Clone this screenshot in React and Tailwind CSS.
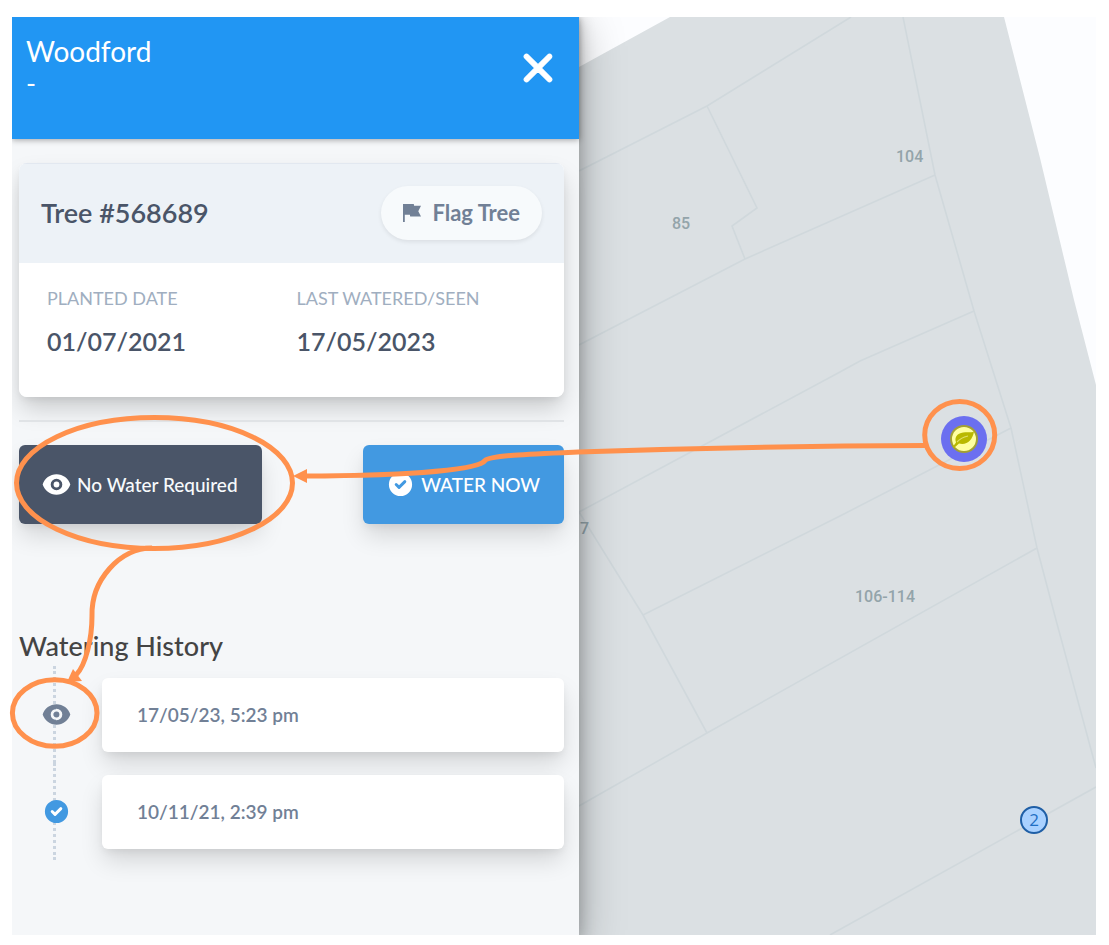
import React from "react";
import { HiCheckCircle, HiEye, HiX } from "react-icons/hi";

const history = [
  { id: 1, type: "seen", date: "17/05/23, 5:23 pm" },
  { id: 2, type: "watered", date: "10/11/21, 2:39 pm" },
];

const parcels = [
  "M579 171 L707 106 L851 17",
  "M707 106 L757 208 L732 226 L745 259",
  "M579 345 L745 259 L935 175",
  "M903 17 L935 175 L974 311 L1011 428 L1037 548 L1056 620 L1096 768",
  "M579 512 L840 372 L860 361 L974 311",
  "M579 512 L643 615 L707 733",
  "M643 615 L840 516 L1011 428",
  "M1037 548 L707 733 L579 806",
  "M1096 787 L830 935",
];

const houses = [
  { label: "104", x: 896, y: 162 },
  { label: "85", x: 672, y: 229 },
  { label: "7", x: 580, y: 534 },
  { label: "106-114", x: 855, y: 602 },
];

function FlagIcon() {
  return (
    <svg viewBox="0 0 20 20" className="h-[18px] w-[18px] fill-current" aria-hidden="true">
      <path d="M7.667 12H2v8H0V0h12l.333 2H20l-3 6 3 6H8l-.333-2z" />
    </svg>
  );
}

function Header() {
  return (
    <header className="relative z-10 flex items-start justify-between bg-[#2196f3] pt-4 pr-[18px] pb-[42px] pl-[14px] text-white shadow-[0_1px_6px_rgba(0,0,0,0.35)]">
      <div>
        <h1 className="text-[28px] leading-9">Woodford</h1>
        <p className="text-[27px] leading-7">-</p>
      </div>
      <button type="button" aria-label="Close" className="mt-3">
        <HiX className="h-[46px] w-[46px] stroke-white stroke-[0.5]" />
      </button>
    </header>
  );
}

function TreeCard() {
  return (
    <section className="overflow-hidden rounded-lg bg-white">
      <div className="flex items-center justify-between border-t border-[#e2e8f0] bg-[#edf2f7] px-[22px] pt-[22px] pb-[23px]">
        <h2 className="text-[27px] leading-9 font-semibold text-[#4a5568]">Tree #568689</h2>
        <button
          type="button"
          className="flex items-center gap-[11px] rounded-full bg-[#f7fafc] px-[22px] py-[13px] text-[22px] leading-7 font-bold text-[#718096] shadow-[0_2px_4px_rgba(0,0,0,0.08)]"
        >
          <FlagIcon />
          Flag Tree
        </button>
      </div>
      <dl className="grid grid-cols-2 pt-[23px] pr-[18px] pb-[38px] pl-7">
        <div>
          <dt className="text-[18px] leading-6 text-[#a0aec0]">PLANTED DATE</dt>
          <dd className="mt-[13px] text-[25px] leading-9 font-semibold text-[#4a5568]">01/07/2021</dd>
        </div>
        <div>
          <dt className="text-[18px] leading-6 text-[#a0aec0]">LAST WATERED/SEEN</dt>
          <dd className="mt-[13px] text-[25px] leading-9 font-semibold text-[#4a5568]">17/05/2023</dd>
        </div>
      </dl>
    </section>
  );
}

function HistoryItem({ item }) {
  return (
    <li className="flex">
      <div className="relative mr-[9px] flex w-[74px] shrink-0 items-center justify-center">
        <span className="absolute inset-y-0 left-[34px] border-l-[3px] border-dotted border-[#cbd5e0]" />
        {item.type === "seen" ? (
          <HiEye className="relative h-[29px] w-[29px] text-[#718096]" />
        ) : (
          <span className="relative">
            <span className="absolute inset-2 rounded-full bg-white" />
            <HiCheckCircle className="relative h-[29px] w-[29px] text-[#4299e1]" />
          </span>
        )}
      </div>
      <div className="mt-3 mb-[11px] flex-1 rounded-md bg-white px-[35px] py-[23px] text-[19px] leading-7 font-semibold text-[#718096] shadow-[0_13px_24px_-2px_rgba(0,0,0,0.14),0_4px_8px_-2px_rgba(0,0,0,0.07)]">
        {item.date}
      </div>
    </li>
  );
}

function SidePanel() {
  return (
    <aside className="relative z-10 bg-[#f5f7f9] shadow-[0_4px_14px_2px_rgba(0,0,0,0.2),0_12px_40px_3px_rgba(0,0,0,0.25)]">
      <Header />
      <div className="pt-6 pr-[15px] pb-16 pl-[7px]">
        <div className="rounded-lg shadow-[0_13px_24px_-2px_rgba(0,0,0,0.18),0_4px_8px_-2px_rgba(0,0,0,0.08)]">
          <TreeCard />
        </div>
        <hr className="my-[23px] border-t-2 border-[#e0e3e6]" />
        <div className="flex items-center justify-between">
          <button
            type="button"
            className="flex items-center gap-[6px] rounded-md bg-[#4a5568] py-[25px] pr-6 pl-[23px] text-[19px] leading-7 font-medium text-[#f7fafc] shadow-[0_13px_24px_-2px_rgba(0,0,0,0.14),0_4px_8px_-2px_rgba(0,0,0,0.07)]"
          >
            <HiEye className="h-[29px] w-[29px] text-white" />
            No Water Required
          </button>
          <button
            type="button"
            className="flex items-center gap-[6px] rounded-md bg-[#4299e1] py-[25px] pr-6 pl-[23px] text-[19px] leading-7 font-medium text-white shadow-[0_13px_24px_-2px_rgba(0,0,0,0.14),0_4px_8px_-2px_rgba(0,0,0,0.07)]"
          >
            <HiCheckCircle className="h-[29px] w-[29px]" />
            WATER NOW
          </button>
        </div>
        <h2 className="mt-[102px] text-[27px] leading-10 font-medium text-[#444444]">Watering History</h2>
        <ul>
          {history.map((item) => (
            <HistoryItem key={item.id} item={item} />
          ))}
        </ul>
      </div>
    </aside>
  );
}

function TreeMarker() {
  return (
    <g>
      <circle cx="964" cy="439" r="23" fill="#6b6ff0" />
      <circle cx="964" cy="439" r="13" fill="#ffffa0" stroke="#a3a034" strokeWidth="2" />
      <path
        d="M974 431.500 C972.500 440 967 445.500 959 443.500 L954 448 L953 446.500 L956 442.500 C953.500 435.500 960 432 966 432.300 C969 432.500 972 432.300 974 431.500 Z"
        fill="#b9b800"
      />
      <path d="M957 442 C960 438.500 964 437 968 436" fill="none" stroke="#e0df6a" strokeWidth="1.2" />
    </g>
  );
}

function ParcelMap() {
  return (
    <main className="relative overflow-hidden bg-[#fcfdff]">
      <svg
        viewBox="579 17 517 918"
        preserveAspectRatio="xMinYMin slice"
        className="absolute inset-0 h-full w-full"
      >
        <path d="M579 67 L670 17 L1004 17 L1040 158 L1074 300 L1096 385 V935 H579 Z" fill="#dbe0e3" />
        <g fill="none" stroke="#d0d8dc" strokeWidth="1.6">
          {parcels.map((d) => (
            <path key={d} d={d} />
          ))}
        </g>
        <g fill="#93a4aa" className="font-['Roboto',sans-serif] text-[16px] font-medium">
          {houses.map((h) => (
            <text key={h.label} x={h.x} y={h.y}>
              {h.label}
            </text>
          ))}
        </g>
        <TreeMarker />
        <circle cx="1034" cy="820" r="13" fill="#a9d1ff" stroke="#1f5fa6" strokeWidth="2" />
        <text
          x="1034"
          y="826"
          textAnchor="middle"
          fill="#1f6fc4"
          className="font-['Open_Sans',sans-serif] text-[17px]"
        >
          2
        </text>
      </svg>
    </main>
  );
}

function Annotations() {
  return (
    <svg
      viewBox="0 0 1109 945"
      preserveAspectRatio="xMinYMin meet"
      className="pointer-events-none absolute inset-0 z-20 h-full w-full"
      aria-hidden="true"
    >
      <g fill="none" stroke="#ff914d" strokeWidth="5">
        <ellipse cx="154.5" cy="483" rx="138" ry="65.5" />
        <ellipse cx="54.7" cy="713" rx="42.3" ry="33.3" />
        <ellipse cx="959.7" cy="435" rx="35" ry="33.5" />
        <path d="M926 445.500 C800 446 670 449 578 452 C530 454 490 455.500 485 460.500 C477 472 385 475.500 304 476" />
        <path d="M152 548 C120 548 91 580 92 616 C92 638 86 665 76 675" />
      </g>
      <path d="M293 476 L307 469 V483 Z" fill="#ff914d" />
      <path d="M67 682 L73 669 L82 681 Z" fill="#ff914d" />
    </svg>
  );
}

export default function App() {
  return (
    <div className="relative flex min-h-screen bg-white pt-[17px] pr-[13px] pb-[10px] pl-3 font-['Lato',sans-serif]">
      <div className="grid flex-1 grid-cols-[567fr_517fr] overflow-hidden">
        <SidePanel />
        <ParcelMap />
      </div>
      <Annotations />
    </div>
  );
}
